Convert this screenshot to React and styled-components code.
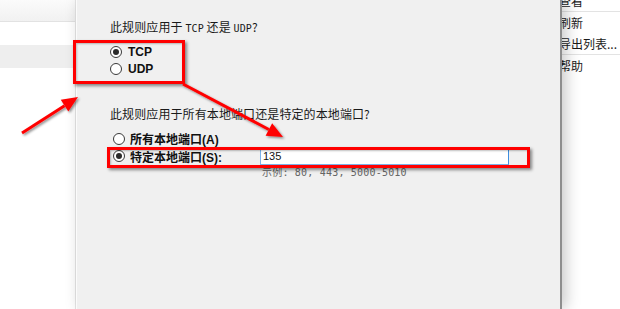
import React from "react";
import styled, { createGlobalStyle } from "styled-components";

const Global = createGlobalStyle`
  html, body { margin: 0; padding: 0; background: #fff; overflow: hidden; }
  body { font-family: "Noto Sans CJK SC", "Liberation Sans", sans-serif; }
`;

const Page = styled.div`
  position: relative;
  width: 620px;
  height: 309px;
  display: flex;
  overflow: hidden;
  background: #fff;
`;

const LeftPanel = styled.div`
  width: 75px;
  flex: none;
  border-right: 1px solid #e6e6e6;
  display: flex;
  flex-direction: column;
`;

const ListRow = styled.div`
  height: ${(p) => p.$h}px;
  flex: none;
  background: ${(p) => p.$bg};
  border-bottom: ${(p) => (p.$line ? "1px solid #e2e2e2" : "none")};
`;

const Dialog = styled.div`
  position: relative;
  z-index: 1;
  width: 486px;
  flex: none;
  background: #f0f0f0;
  border-left: 1px solid #fbfbfb;
  border-right: 2px solid #8e8e8e;
  box-shadow: 4px 0 14px rgba(0, 0, 0, 0.22);
  padding: 19px 0 0 33px;
  box-sizing: border-box;
  font-size: 12px;
  color: #1a1a1a;
`;

const Question = styled.div`
  height: 16px;
  line-height: 16px;
  font-size: 12px;
  margin-top: ${(p) => p.$mt || 0}px;
  letter-spacing: 0.1px;
`;

const Mono = styled.span`
  font-family: "DejaVu Sans Mono", "Liberation Mono", monospace;
  font-size: 10px;
`;

const RadioGroup = styled.div`
  display: flex;
  flex-direction: column;
  margin-top: ${(p) => p.$mt}px;
  margin-left: ${(p) => p.$ml}px;
`;

const RadioRow = styled.div`
  display: flex;
  align-items: center;
  height: ${(p) => p.$h || 17}px;
`;

const Circle = styled.span`
  width: 12px;
  height: 12px;
  box-sizing: border-box;
  border-radius: 50%;
  border: 1px solid #3a3a3a;
  background: #fff;
  flex: none;
  display: flex;
  align-items: center;
  justify-content: center;
  &::after {
    content: "";
    width: 6px;
    height: 6px;
    border-radius: 50%;
    background: ${(p) => (p.$on ? "#2a2a2a" : "transparent")};
  }
`;

const Label = styled.span`
  margin-left: ${(p) => p.$gap || 6}px;
  font-family: "Liberation Sans", "Noto Sans CJK SC", sans-serif;
  font-weight: bold;
  font-size: 12px;
  color: #111;
  width: ${(p) => (p.$w ? p.$w + "px" : "auto")};
  flex: none;
`;

const Input = styled.div`
  width: 249px;
  height: 18px;
  box-sizing: border-box;
  background: #fff;
  border: 1px solid #7eb4ea;
  border-right-color: #3d8ee0;
  font-family: "Liberation Sans", sans-serif;
  font-size: 11px;
  line-height: 16px;
  padding-left: 2px;
  color: #111;
`;

const Example = styled.div`
  margin-left: 149px;
  margin-top: 1px;
  height: 14px;
  line-height: 14px;
  font-family: "DejaVu Sans Mono", "Noto Sans CJK SC", monospace;
  font-size: 10px;
  color: #666;
  letter-spacing: 0.2px;
`;

const Menu = styled.div`
  flex: 1;
  margin-left: -3px;
  margin-top: -10px;
  display: flex;
  flex-direction: column;
  font-size: 12px;
  color: #1a1a1a;
`;

const MenuItem = styled.div`
  height: 21px;
  line-height: 21px;
  white-space: nowrap;
`;

const Sep = styled.div`
  height: 1px;
  background: #e3e3e3;
`;

const RedBox = styled.div`
  position: absolute;
  z-index: 3;
  left: ${(p) => p.$x}px;
  top: ${(p) => p.$y}px;
  width: ${(p) => p.$w}px;
  height: ${(p) => p.$h}px;
  box-sizing: border-box;
  border: 3px solid #f00;
  box-shadow: 2px 2px 3px rgba(0, 0, 0, 0.45), inset 1px 1px 2px rgba(0, 0, 0, 0.25);
`;

const Overlay = styled.svg`
  position: absolute;
  left: 0;
  top: 0;
  z-index: 4;
  pointer-events: none;
`;

function Arrow({ x1, y1, x2, y2 }) {
  const ang = Math.atan2(y2 - y1, x2 - x1);
  const len = 16;
  const half = 7;
  const bx = x2 - len * Math.cos(ang);
  const by = y2 - len * Math.sin(ang);
  const px = -Math.sin(ang) * half;
  const py = Math.cos(ang) * half;
  const pts = `${x2},${y2} ${bx + px},${by + py} ${bx - px},${by - py}`;
  return (
    <g filter="url(#sh)">
      <line x1={x1} y1={y1} x2={bx} y2={by} stroke="#f00" strokeWidth="3" />
      <polygon points={pts} fill="#f00" />
    </g>
  );
}

export default function App() {
  return (
    <>
      <Global />
      <Page>
        <LeftPanel>
          <ListRow $h={21} $bg="linear-gradient(#fbfbfb,#f1f1f1)" $line />
          <ListRow $h={23} $bg="#fff" />
          <ListRow $h={23} $bg="#eeeeee" />
          <ListRow $h={242} $bg="#fff" />
        </LeftPanel>
        <Dialog>
          <Question>
            此规则应用于 <Mono>TCP</Mono> 还是 <Mono>UDP</Mono>?
          </Question>
          <RadioGroup $mt={8} $ml={0}>
            <RadioRow>
              <Circle $on />
              <Label>TCP</Label>
            </RadioRow>
            <RadioRow>
              <Circle />
              <Label>UDP</Label>
            </RadioRow>
          </RadioGroup>
          <Question $mt={29}>此规则应用于所有本地端口还是特定的本地端口?</Question>
          <RadioGroup $mt={8} $ml={3}>
            <RadioRow>
              <Circle />
              <Label $gap={5}>所有本地端口(A)</Label>
            </RadioRow>
            <RadioRow $h={18}>
              <Circle $on />
              <Label $gap={5} $w={130}>特定本地端口(S):</Label>
              <Input>135</Input>
            </RadioRow>
            <Example>示例: 80, 443, 5000-5010</Example>
          </RadioGroup>
        </Dialog>
        <Menu>
          <MenuItem>查看</MenuItem>
          <Sep />
          <MenuItem>刷新</MenuItem>
          <MenuItem>导出列表...</MenuItem>
          <Sep />
          <MenuItem>帮助</MenuItem>
        </Menu>
        <RedBox $x={73} $y={40} $w={112} $h={44} />
        <RedBox $x={107} $y={147} $w={423} $h={21} />
        <Overlay width="620" height="309" viewBox="0 0 620 309">
          <defs>
            <filter id="sh" x="-20%" y="-20%" width="140%" height="140%">
              <feDropShadow dx="1.5" dy="1.5" stdDeviation="1.2" floodColor="#000" floodOpacity="0.45" />
            </filter>
          </defs>
          <Arrow x1={22} y1={133} x2={78} y2={97} />
          <Arrow x1={183} y1={84} x2={283} y2={137} />
        </Overlay>
      </Page>
    </>
  );
}
